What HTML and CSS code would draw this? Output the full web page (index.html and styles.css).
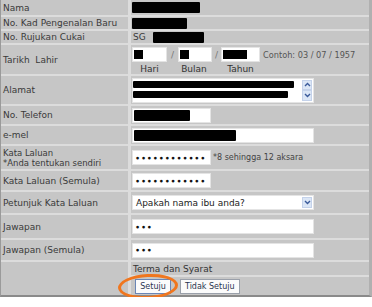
FILE: index.html
```html
<!DOCTYPE html>
<html lang="ms">
<head>
  <meta charset="UTF-8" />
  <title>Pendaftaran</title>
  <link rel="stylesheet" href="styles.css">
</head>
<body>
  <div class="form">
    <div class="lbl r1">Nama</div>
    <div class="val r1"><span class="blk" style="width:68px"></span></div>

    <div class="lbl r2">No. Kad Pengenalan Baru</div>
    <div class="val r2"><span class="blk" style="width:55px"></span></div>

    <div class="lbl r3">No. Rujukan Cukai</div>
    <div class="val r3"><span class="sg">SG</span><span class="blk" style="width:51px"></span></div>

    <div class="lbl r4">Tarikh&nbsp; Lahir</div>
    <div class="val r4 dob">
      <div class="dob-row">
        <div class="box w35"><span class="sq"></span></div>
        <span class="slash">/</span>
        <div class="box w34"><span class="sq"></span></div>
        <span class="slash s2">/</span>
        <div class="box w39"><span class="sq" style="width:24px"></span></div>
        <span class="hint">Contoh: 03 / 07 / 1957</span>
      </div>
      <div class="dob-cap">
        <span class="w35">Hari</span>
        <span class="w34">Bulan</span>
        <span class="w39">Tahun</span>
      </div>
    </div>

    <div class="lbl r5">Alamat</div>
    <div class="val r5">
      <div class="area">
        <div class="area-text">
          <span class="blk" style="width:161px"></span>
          <span class="blk" style="width:155px"></span>
        </div>
        <div class="scroll">
          <span class="arr"><svg width="7" height="5" viewBox="0 0 7 5"><path d="M1 4 L3.5 1.5 L6 4" fill="none" stroke="#3a5a9a" stroke-width="1.4"/></svg></span>
          <span class="arr"><svg width="7" height="5" viewBox="0 0 7 5"><path d="M1 1 L3.5 3.5 L6 1" fill="none" stroke="#3a5a9a" stroke-width="1.4"/></svg></span>
        </div>
      </div>
    </div>

    <div class="lbl r6">No. Telefon</div>
    <div class="val r6"><div class="box w79"><span class="blk" style="width:56px"></span></div></div>

    <div class="lbl r7">e-mel</div>
    <div class="val r7"><div class="box wide"><span class="blk" style="width:102px"></span></div></div>

    <div class="lbl r8 two">Kata Laluan<br>*Anda tentukan sendiri</div>
    <div class="val r8"><div class="box w79 pw">&#9679;&#9679;&#9679;&#9679;&#9679;&#9679;&#9679;&#9679;&#9679;&#9679;&#9679;&#9679;</div><span class="note">*8 sehingga 12 aksara</span></div>

    <div class="lbl r9">Kata Laluan (Semula)</div>
    <div class="val r9"><div class="box w79 pw">&#9679;&#9679;&#9679;&#9679;&#9679;&#9679;&#9679;&#9679;&#9679;&#9679;&#9679;&#9679;</div></div>

    <div class="lbl r10">Petunjuk Kata Laluan</div>
    <div class="val r10">
      <div class="box wide select">
        <span class="opt">Apakah nama ibu anda?</span>
        <span class="arr"><svg width="7" height="5" viewBox="0 0 7 5"><path d="M1 1 L3.5 3.5 L6 1" fill="none" stroke="#3a5a9a" stroke-width="1.4"/></svg></span>
      </div>
    </div>

    <div class="lbl r11">Jawapan</div>
    <div class="val r11"><div class="box wide pw">&#9679;&#9679;&#9679;</div></div>

    <div class="lbl r12">Jawapan (Semula)</div>
    <div class="val r12"><div class="box wide pw">&#9679;&#9679;&#9679;</div></div>

    <div class="lbl r13"></div>
    <div class="val r13a"><span class="terms">Terma dan Syarat</span></div>
    <div class="val r13b">
      <span class="btn-wrap">
        <button class="btn agree">Setuju</button>
        <span class="ring"></span>
      </span>
      <button class="btn">Tidak Setuju</button>
    </div>
  </div>
</body>
</html>
```

FILE: styles.css
```css
* {
  margin: 0;
  padding: 0;
  box-sizing: border-box;
}

body {
  background: #ffffff;
  font-family: "DejaVu Sans", Verdana, sans-serif;
  font-size: 9px;
  color: #3a3a3a;
}

.form {
  width: 372px;
  display: grid;
  grid-template-columns: 127px 1fr;
  grid-template-rows: 15px 12px 12px 29px 28px 18px 18px 23px 19px 21px 23px 20px 13px 18px;
  column-gap: 3px;
  row-gap: 2px;
  background: #dcdcdc;
  border-left: 1px solid #9a9a9a;
  border-right: 3px solid #b0b0b0;
  border-bottom: 2px solid #8a8a8a;
}

.lbl,
.val {
  background: #c6c6c6;
  display: flex;
  align-items: center;
  white-space: nowrap;
}

.lbl {
  padding-left: 2px;
}

.lbl.two {
  line-height: 10px;
  display: block;
  padding-top: 2px;
  font-size: 8.5px;
}

.lbl.r13 {
  grid-row: 13 / span 2;
}

.val {
  padding-left: 1px;
}

.blk {
  display: inline-block;
  height: 11px;
  background: #000;
  border-radius: 1px;
}

.sg {
  width: 21px;
  padding-left: 1px;
}

.box {
  height: 15px;
  background: #fff;
  border: 1px solid #e4e4e4;
  display: flex;
  align-items: center;
  padding-left: 1px;
}

.w35 { width: 35px; }
.w34 { width: 34px; }
.w39 { width: 39px; }
.w79 { width: 79px; }
.wide { width: 182px; }

.sq {
  display: inline-block;
  width: 9px;
  height: 9px;
  background: #000;
}

.dob {
  flex-direction: column;
  align-items: flex-start;
  justify-content: flex-start;
  padding-top: 2px;
}

.dob-row {
  display: flex;
  align-items: center;
}

.slash {
  width: 11px;
  text-align: center;
  color: #777;
}

.slash.s2 {
  width: 9px;
}

.hint {
  margin-left: 3px;
  color: #555;
  font-size: 8.2px;
}

.dob-cap {
  display: flex;
  gap: 10px;
  margin-top: 2px;
}

.dob-cap span {
  text-align: center;
  color: #333;
}

.area {
  width: 182px;
  height: 25px;
  background: #fff;
  border: 1px solid #e4e4e4;
  display: flex;
}

.area-text {
  flex: 1;
  display: flex;
  flex-direction: column;
  gap: 3px;
  padding-top: 2px;
}

.area-text .blk {
  height: 7px;
}

.scroll {
  width: 11px;
  display: flex;
  flex-direction: column;
  justify-content: space-between;
  padding: 1px 0;
}

.arr {
  width: 10px;
  height: 11px;
  background: #dbe6f6;
  border: 1px solid #c4d2ea;
  display: flex;
  align-items: center;
  justify-content: center;
}

.pw {
  font-size: 3.6px;
  letter-spacing: 2.8px;
  color: #111;
  padding-left: 3px;
}

.note {
  margin-left: 2px;
  color: #444;
  font-size: 8px;
}

.select {
  justify-content: space-between;
  padding-right: 1px;
}

.opt {
  padding-left: 2px;
  color: #222;
}

.terms {
  padding-left: 1px;
  color: #333;
}

.r13b {
  padding-left: 4px;
  gap: 9px;
}

.btn-wrap {
  position: relative;
  display: inline-flex;
}

.btn {
  font-family: "DejaVu Sans", Verdana, sans-serif;
  font-size: 8px;
  color: #2a3550;
  height: 15px;
  padding: 0 4px;
  background: #fbfbfb;
  border: 1px solid #9aa0aa;
}

.btn.agree {
  border-color: #6a86b6;
  width: 36px;
}

.ring {
  position: absolute;
  left: -17px;
  top: -5px;
  width: 60px;
  height: 25px;
  border: 3px solid #f0761e;
  border-radius: 50%;
  transform: rotate(-3deg);
}
```
